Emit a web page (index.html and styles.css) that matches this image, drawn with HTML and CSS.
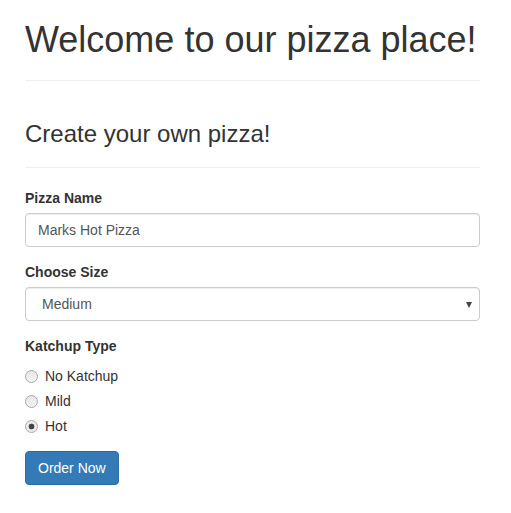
FILE: index.html
```html
<!DOCTYPE html>
<html>
<head>
<meta charset="utf-8">
<link rel="stylesheet" href="styles.css">
</head>
<body>
<div class="container">
  <h1 class="title">Welcome to our pizza place!</h1>
  <hr class="rule">
  <h3 class="subtitle">Create your own pizza!</h3>
  <hr class="rule">
  <form class="pizza-form">
    <div class="form-group">
      <label class="control-label">Pizza Name</label>
      <input class="form-control" type="text" value="Marks Hot Pizza">
    </div>
    <div class="form-group">
      <label class="control-label">Choose Size</label>
      <div class="select-wrap">
        <select class="form-control select">
          <option>Small</option>
          <option selected>Medium</option>
          <option>Large</option>
        </select>
      </div>
    </div>
    <div class="form-group">
      <label class="control-label">Katchup Type</label>
      <div class="radio"><label><input type="radio" name="k"> No Katchup</label></div>
      <div class="radio"><label><input type="radio" name="k"> Mild</label></div>
      <div class="radio"><label><input type="radio" name="k" checked> Hot</label></div>
    </div>
    <button type="button" class="btn btn-primary">Order Now</button>
  </form>
</div>
</body>
</html>
```

FILE: styles.css
```css
* { box-sizing: border-box; }
html, body { margin: 0; padding: 0; }
body {
  font-family: "Liberation Sans", Arial, sans-serif;
  font-size: 14px;
  line-height: 20px;
  color: #333;
  background: #fff;
}
.container {
  width: 455px;
  margin-left: 25px;
  padding-top: 1px;
  margin-top: -1px;
}
.title {
  font-size: 36px;
  font-weight: 500;
  line-height: 1.1;
  margin: 20px 0 10px;
}
.rule {
  margin: 20px 0;
  border: 0;
  border-top: 1px solid #eee;
  height: 0;
}
.subtitle {
  font-size: 24px;
  font-weight: 500;
  line-height: 1.1;
  margin: 40px 0 10px;
}
.pizza-form { margin: 0; }
.form-group { margin-bottom: 15px; }
.control-label {
  display: block;
  margin-bottom: 5px;
  font-weight: bold;
}
.form-control {
  display: block;
  width: 100%;
  height: 34px;
  padding: 6px 12px;
  font-family: inherit;
  font-size: 14px;
  line-height: 20px;
  color: #555;
  background: #fff;
  border: 1px solid #ccc;
  border-radius: 4px;
  box-shadow: inset 0 1px 1px rgba(0,0,0,.075);
  margin: 0;
}
.select-wrap { position: relative; }
.select {
  -webkit-appearance: none;
  appearance: none;
  padding-left: 16px;
}
.select-wrap::after {
  content: "";
  position: absolute;
  right: 8px;
  top: 15px;
  border-left: 3.5px solid transparent;
  border-right: 3.5px solid transparent;
  border-top: 6px solid #444;
  pointer-events: none;
}
.radio {
  position: relative;
  display: block;
  margin: 10px 0;
}
.radio + .radio { margin-top: -5px; }
.radio label {
  display: block;
  min-height: 20px;
  padding-left: 20px;
  font-weight: normal;
}
.radio input {
  -webkit-appearance: none;
  appearance: none;
  position: absolute;
  left: 0;
  top: 4px;
  margin: 0;
  width: 13px;
  height: 13px;
  border-radius: 50%;
  border: 1px solid #a9a9a9;
  background: linear-gradient(#e6e6e6, #f4f4f4);
}
.radio input:checked {
  background: radial-gradient(circle, #444 0, #444 2.6px, #e9e9e9 3.2px, #f2f2f2 100%);
}
.btn {
  display: inline-block;
  padding: 6px 12px;
  font-family: inherit;
  font-size: 14px;
  line-height: 20px;
  border: 1px solid transparent;
  border-radius: 4px;
  margin: 0;
  cursor: pointer;
}
.btn-primary {
  color: #fff;
  background: #337ab7;
  border-color: #2e6da4;
}
```
